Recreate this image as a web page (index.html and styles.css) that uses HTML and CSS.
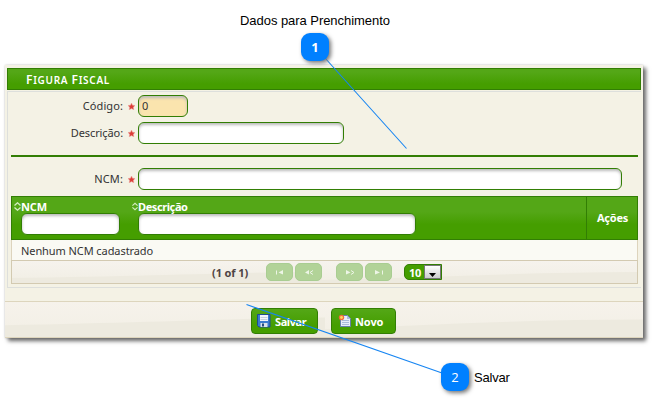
FILE: index.html
```html
<!DOCTYPE html>
<html lang="pt-BR">
<head>
<meta charset="utf-8">
<title>Figura Fiscal</title>
<link rel="stylesheet" href="styles.css">
</head>
<body>
<main class="stage">
  <section class="dialog">
    <h1 class="titlebar"><span class="cap">F</span>IGURA <span class="cap">F</span>ISCAL</h1>
    <div class="content">
      <div class="field"><span class="label">Código:</span><svg class="req" viewBox="0 0 7 7"><path d="M3.5 0 4.5 2.2 7 2.5 5.3 4.2 5.8 6.8 3.5 5.6 1.2 6.8 1.7 4.2 0 2.5 2.5 2.2Z"/></svg><span class="input code">0</span></div>
      <div class="field"><span class="label label-desc">Descrição:</span><svg class="req" viewBox="0 0 7 7"><path d="M3.5 0 4.5 2.2 7 2.5 5.3 4.2 5.8 6.8 3.5 5.6 1.2 6.8 1.7 4.2 0 2.5 2.5 2.2Z"/></svg><span class="input desc"></span></div>
      <div class="rule"></div>
      <div class="field"><span class="label">NCM:</span><svg class="req" viewBox="0 0 7 7"><path d="M3.5 0 4.5 2.2 7 2.5 5.3 4.2 5.8 6.8 3.5 5.6 1.2 6.8 1.7 4.2 0 2.5 2.5 2.2Z"/></svg><span class="input ncm"></span></div>
      <div class="table">
        <div class="thead">
          <div class="th th-ncm"><span class="th-title"><svg class="sort" viewBox="0 0 7 9"><path d="M.5 3.5 3.5.8l3 2.7M.5 5.5l3 2.7 3-2.7"/></svg><span class="th-ncm-text">NCM</span></span><span class="input filter"></span></div>
          <div class="th th-desc"><span class="th-title"><svg class="sort" viewBox="0 0 7 9"><path d="M.5 3.5 3.5.8l3 2.7M.5 5.5l3 2.7 3-2.7"/></svg><span class="th-desc-text">Descrição</span></span><span class="input filter"></span></div>
          <div class="th-actions">Ações</div>
        </div>
        <div class="empty"><span class="empty-text">Nenhum NCM cadastrado</span></div>
        <div class="pager">
          <svg class="wave" viewBox="0 0 625 22" preserveAspectRatio="none"><path d="M0 17C150 15 230 11 310 11V22H0ZM310 19C430 16 530 11 625 11V22H310Z"/></svg>
          <span class="count">(1 of 1)</span>
          <span class="page"><svg viewBox="0 0 10 6"><path d="M1 1.5h1v4H1zM8 1v4.500L3.500 3.500Z"/></svg></span>
          <span class="page"><svg viewBox="0 0 10 6"><path d="M5 1v4.500L1 3.500Z"/><path class="chev" d="M9 1.500 6 3.500l3 2"/></svg></span>
          <span class="page page-next"><svg viewBox="0 0 10 6"><path d="M1 1v4.500L5.500 3.500Z"/><path class="chev" d="m6 1.500 3 2-3 2"/></svg></span>
          <span class="page"><svg viewBox="0 0 10 6"><path d="M1 1v4.500L6 3.500ZM8 1.500h1v4H8z"/></svg></span>
          <span class="select"><span class="num">10</span><span class="arrow"><svg viewBox="0 0 7 4"><path d="M0 0h7L3.500 4Z"/></svg></span></span>
        </div>
      </div>
    </div>
    <footer class="footer">
      <svg class="wave" viewBox="0 0 638 36" preserveAspectRatio="none"><path d="M0 24C150 21 230 17 320 16V36H0ZM320 28C430 23 530 18 638 18V36H320Z"/></svg>
      <div class="button save">
        <svg class="icon" viewBox="0 0 14 14"><path fill="#3b7bd0" stroke="#1d4c93" d="M.5.500h12.500v12.500H2L.500 11.500Z"/><path fill="#f2f5fa" d="M3 1h8v6H3z"/><path fill="#c3d0df" d="M3.500 3h7v1h-7zM3.500 5h7v1h-7z"/><path fill="#d9e2ec" d="M3.500 9h7v4h-7z"/><path fill="#244d82" d="M5 9.500h2v3H5z"/></svg>
        <span class="save-text">Salvar</span>
      </div>
      <div class="button new">
        <svg class="icon" viewBox="0 0 14 14"><path fill="#e6edf8" stroke="#6680a8" d="M2.500 1.500h7l3 3v8h-10Z"/><path fill="#a9bcd9" d="M9 1.500V5h3.500ZM4 6h7v1H4ZM4 8h7v1H4ZM4 10h7v1H4Z"/><circle cx="3.500" cy="3.500" r="2.700" fill="#f06b38"/><circle cx="3.500" cy="3.500" r="1.400" fill="#ffd65c"/></svg>
        <span class="new-text">Novo</span>
      </div>
    </footer>
  </section>
  <svg class="leaders" viewBox="0 0 652 402"><path d="M325 58 406.500 148.500M246.500 304.500 442 373"/></svg>
  <span class="note note-one">Dados para Prenchimento</span>
  <span class="badge badge-one">1</span>
  <span class="badge badge-two">2</span>
  <span class="note note-two">Salvar</span>
</main>
</body>
</html>
```
FILE: styles.css
```css
* { box-sizing: border-box; }
body { margin: 0; background: #fff; font: 11px/15px "Noto Sans", sans-serif; color: #333; }
.stage { position: relative; width: 652px; height: 402px; padding: 65px 0 0 5px; overflow: hidden; }
.dialog { width: 638px; height: 273px; padding-top: 3px; background: #f4f2e5; box-shadow: 3px 3px 4px #666, 0 0 2px #ccc; }
.titlebar { width: 634px; height: 22px; margin: 0 0 1px 2px; padding: 2px 0 0 18px; border: 1px solid #327e04; background: linear-gradient(#54a717, #54a717 15%, #459e00 75%); color: #fff; font-size: 10px; line-height: 18px; font-weight: 600; letter-spacing: .7px; white-space: nowrap; }
.cap { font-size: 12px; }
.content { width: 634px; height: 197px; margin-left: 2px; padding: 3px 0 0 4px; border: 1px solid #dddfdc; border-right: 0; margin-bottom: 13px; }
.field { display: flex; align-items: center; height: 22px; margin: 0 0 5px -1px; }
.label { width: 112px; height: 17px; text-align: right; letter-spacing: .1px; }
.label-desc { letter-spacing: -.1px; }
.req { width: 7px; height: 7px; margin: 0 3px 0 5px; fill: #dc3d38; stroke: #eda19a; stroke-width: .5; }
.input { display: block; height: 22px; padding: 2px 3px; border: 1px solid #327e04; border-radius: 6px; background: #fff; box-shadow: inset 0 2px 3px #bbb; }
.code { width: 50px; background: #fae4ae; }
.desc { width: 206px; }
.ncm { width: 484px; }
.rule { width: 627px; height: 2px; margin: 11px 0 11px -1px; background: #327e04; }
.table { width: 627px; height: 88px; margin: 6px 0 0 -1px; }
.content > .field:nth-of-type(4) { margin-bottom: 0; }
.thead { display: flex; height: 44px; border: 1px solid #327e04; background: linear-gradient(#54a717, #54a717 35%, #459e00 65%); color: #fff; font-weight: 700; }
.th { padding: 3px 0 0 9px; }
.th-ncm { width: 118px; }
.th-desc { width: 456px; padding-left: 8px; }
.th-title { display: flex; align-items: center; height: 13px; margin-left: -7px; letter-spacing: -.08px; }
.th-desc .th-title { margin-left: -6px; letter-spacing: -.4px; }
.th-ncm-text, .th-desc-text { line-height: 13px; }
.sort { width: 7px; height: 9px; fill: none; stroke: #d5edc2; stroke-width: 1.300; }
.th-desc .sort { width: 6px; }
.filter { width: 99px; }
.th-desc .filter { width: 278px; }
.th-actions { flex: 1; padding-left: 10px; border-left: 1px solid #327e04; line-height: 41px; letter-spacing: -.25px; }
.empty { height: 20px; padding: 3px 0 0 9px; border: solid #ddd4bd; border-width: 0 1px; background: #fafaf4; letter-spacing: -.08px; }
.pager { position: relative; display: flex; align-items: center; height: 24px; padding-left: 200px; border: 1px solid #d3cab1; background: linear-gradient(#f6f3ed, #f1eee4); }
.wave { position: absolute; inset: 0; width: 100%; height: 100%; fill: #edeadf; }
.count { position: relative; width: 54px; font-weight: 700; color: #4f4444; letter-spacing: -.1px; white-space: nowrap; }
.page { position: relative; display: flex; align-items: center; justify-content: center; width: 27px; height: 18px; margin-right: 2px; border: 1px solid #a9cd92; border-radius: 5px; background: #b2d398; }
.page svg { width: 10px; height: 6px; fill: #edf5e6; }
.page .chev { fill: none; stroke: #edf5e6; }
.page-next { margin-left: 12px; }
.select { position: relative; display: flex; width: 38px; height: 16px; margin-left: 10px; border: 1px solid #327e04; border-radius: 5px 0 0 5px; background: #459e00; color: #fff; font-weight: 700; line-height: 15px; }
.num { width: 19px; padding-left: 4px; letter-spacing: -.3px; }
.arrow { display: flex; align-items: flex-end; justify-content: center; width: 17px; height: 14px; padding-bottom: 1px; border: 1px solid #777; background: linear-gradient(#fff, #ccc); }
.arrow svg { width: 7px; height: 4px; }
.footer { position: relative; display: flex; gap: 13px; height: 37px; padding: 6px 0 0 246px; border: solid #ddd5bd; border-width: 1px 0; background: linear-gradient(#f6f2eb, #f2efe5); }
.button { position: relative; display: flex; height: 26px; padding: 5px 0 0 6px; border: 1px solid #327e04; border-radius: 4px; background: linear-gradient(#54a717, #459e00 70%); color: #fff; font-weight: 700; line-height: 16px; }
.save { width: 67px; letter-spacing: -.4px; }
.new { width: 65px; letter-spacing: -.1px; }
.icon { width: 14px; height: 14px; margin-right: 3px; }
.save .icon { margin-left: -1px; margin-right: 4px; }
.leaders { position: absolute; inset: 0; width: 652px; height: 402px; fill: none; stroke: #1685f2; stroke-width: 1.100; }
.badge { position: absolute; width: 28px; height: 28px; border-radius: 9px; background: #0080ff; box-shadow: 2px 2px 4px #777; color: #fff; font: 13px/28px "Open Sans", sans-serif; text-align: center; }
.badge-one { left: 301px; top: 33px; font-weight: 700; }
.badge-two { left: 441px; top: 363px; }
.note { position: absolute; color: #000; font: 13px/15px "Liberation Sans", sans-serif; letter-spacing: -.05px; white-space: nowrap; }
.note-one { left: 240px; top: 13px; }
.note-two { left: 474px; top: 370px; letter-spacing: -.2px; }
```
